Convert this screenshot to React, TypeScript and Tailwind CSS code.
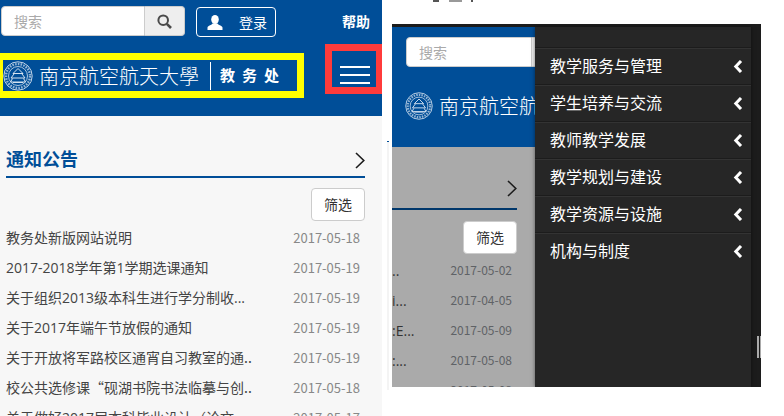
const cjk = "font-['Noto_Sans_CJK_SC','Liberation_Sans',sans-serif]";
const titleFont = "font-['Open_Sans','Noto_Sans_CJK_SC',sans-serif]";

const notices = [
  { title: "教务处新版网站说明", date: "2017-05-18" },
  { title: "2017-2018学年第1学期选课通知", date: "2017-05-19" },
  { title: "关于组织2013级本科生进行学分制收...", date: "2017-05-19" },
  { title: "关于2017年端午节放假的通知", date: "2017-05-19" },
  { title: "关于开放将军路校区通宵自习教室的通..", date: "2017-05-19" },
  { title: "校公共选修课“砚湖书院书法临摹与创..", date: "2017-05-18" },
  { title: "关于做好2017届本科毕业设计（论文..", date: "2017-05-17" },
];

const dimmedRows = [
  { tail: "..", date: "2017-05-02" },
  { tail: "i...", date: "2017-04-05" },
  { tail: ":E...", date: "2017-05-09" },
  { tail: ":...", date: "2017-05-08" },
  { tail: "", date: "2017-05-08" },
];

const menu = [
  "教学服务与管理",
  "学生培养与交流",
  "教师教学发展",
  "教学规划与建设",
  "教学资源与设施",
  "机构与制度",
];

const Emblem = ({ className }: { className: string }) => (
  <svg viewBox="0 0 30 30" className={`shrink-0 ${className}`} fill="none" stroke="#d5e2f0">
    <circle cx="15" cy="15" r="14.2" strokeWidth="0.9" />
    <circle cx="15" cy="15" r="12" strokeWidth="2.4" strokeDasharray="1.6 1.2" opacity="0.7" />
    <circle cx="15" cy="15" r="9.500" strokeWidth="0.8" />
    <path d="M15 7.500 10 12.500h10zM11 13 8 17h14l-3-4M9.500 17.500 7.500 21h15l-2-3.500M10 21.500h10" strokeWidth="1" />
  </svg>
);

const Chevron = () => (
  <svg viewBox="0 0 10 17" className="h-[17px] w-[10px] shrink-0" fill="none" stroke="#1c1c1c" strokeWidth="1.600">
    <path d="M1 1l7.800 7.500L1 16" />
  </svg>
);

const MenuArrow = () => (
  <svg viewBox="0 0 10 13" className="-mt-px h-[13px] w-[10px] shrink-0" fill="none" stroke="#fff" strokeWidth="3">
    <path d="M8 1 2.800 6.500 8 12" />
  </svg>
);

const SearchIcon = () => (
  <svg viewBox="0 0 15 15" className="h-[15px] w-[15px]" fill="none" stroke="#4a4a4a" strokeWidth="2">
    <circle cx="6.200" cy="6.200" r="4.800" />
    <path d="M9.800 9.800 14 14" strokeWidth="2.600" />
  </svg>
);

const UserIcon = () => (
  <svg viewBox="0 0 16 15" className="h-[15px] w-[16px] shrink-0" fill="#fff">
    <ellipse cx="8" cy="4.500" rx="3.800" ry="4.500" />
    <path d="M5.500 8.500C5 10 1 10.500.5 12.500V15h15v-2.500c-.5-2-4.500-2.500-5-4z" />
  </svg>
);

const SearchInput = ({ className }: { className: string }) => (
  <div className={`flex h-[30px] shrink-0 items-center rounded-l-[4px] border border-[#ccc] bg-white pl-[12px] text-[14px] text-[#aaa] ${className}`}>
    搜索
  </div>
);

const FilterButton = () => (
  <div className="flex h-[33px] w-[54px] items-center justify-center rounded-[4px] border border-[#ccc] bg-white text-[14px] text-[#333]">
    筛选
  </div>
);

const App = () => {
  return (
    <div className={`flex h-[416px] w-[784px] overflow-hidden bg-white ${cjk}`}>
      <div className="h-[416px] w-[382px] shrink-0 overflow-hidden bg-[#f7f7f7]">
        <div className="h-[116px] bg-[#004e98]">
          <div className="flex items-start pl-[1px] pt-[6px]">
            <SearchInput className="w-[144px]" />
            <div className="flex h-[30px] w-[40px] items-center justify-center rounded-r-[4px] border border-l-0 border-[#ccc] bg-[#eee]">
              <SearchIcon />
            </div>
            <div className="ml-[11px] mt-[1px] flex h-[30px] w-[80px] items-center rounded-[4px] border border-white pl-[10px] text-[14px] text-white">
              <UserIcon />
              <span className="ml-[16px]">登录</span>
            </div>
            <span className="ml-[66px] mt-[6px] text-[14px] leading-[18px] font-bold text-white">帮助</span>
          </div>
          <div className="mt-[7px] flex items-start">
            <div className="mt-[9px] flex h-[45px] w-[304px] items-center border-[7px] border-l-[3px] border-[#ff0] bg-[#004e98]">
              <Emblem className="h-[30px] w-[30px]" />
              <span className="ml-[6px] text-[20px] leading-none font-light whitespace-nowrap text-white">南京航空航天大學</span>
              <div className="ml-[11px] h-[28px] w-px bg-white" />
              <span className="ml-[9px] text-[15px] font-bold tracking-[7px] whitespace-nowrap text-white">教务处</span>
            </div>
            <div className="ml-[21px] flex h-[50px] w-[57px] flex-col items-center justify-end gap-[6px] border-[7px] border-r-[6px] border-[#ff3b3b] pb-[3px] pl-[2px]">
              <div className="h-[2px] w-[30px] bg-white" />
              <div className="h-[2px] w-[30px] bg-white" />
              <div className="h-[2px] w-[30px] bg-white" />
            </div>
          </div>
        </div>
        <div className="px-[6px] pr-[17px] pt-[28px]">
          <div className="flex h-[34px] items-center justify-between border-b-2 border-[#004e98]">
            <span className="-mt-[3px] text-[18px] font-bold text-[#004e98]">通知公告</span>
            <Chevron />
          </div>
          <div className="mt-[10px] flex justify-end">
            <FilterButton />
          </div>
          <div className="mt-[2px]">
            {notices.map((n) => (
              <div key={n.date + n.title} className="flex h-[30px] items-center justify-between pr-[5px]">
                <span className={`-mt-[1px] text-[14px] whitespace-nowrap text-[#444] ${/\d/.test(n.title) ? titleFont : cjk}`}>{n.title}</span>
                <span className="text-[13px] text-[#888]">{n.date}</span>
              </div>
            ))}
          </div>
        </div>
      </div>

      {/* sliver of the page behind the screenshots */}
      <div className="ml-[5px] mt-[141px] h-[249px] w-[2px] shrink-0 border-t border-[#004e98] bg-[#f4f4f4]" />

      <div className="ml-[3px] flex h-[387px] w-[369px] shrink-0 flex-col">
        <div className="flex h-[24px] shrink-0 items-start pl-[41px]">
          <div className="h-[2px] w-[6px] bg-[#555]" />
          <div className="ml-[10px] h-[2px] w-[13px] bg-[#999]" />
          <div className="ml-[9px] h-[2px] w-[2px] bg-[#555]" />
        </div>
        <div className="flex min-h-0 flex-1 flex-col overflow-hidden bg-[#1c1c1c]">
          <div className="h-[3px] shrink-0" />
          <div className="flex min-h-0 flex-1">
            <div className="flex w-[143px] shrink-0 flex-col overflow-hidden">
              <div className="h-[120px] shrink-0 bg-[#004e98] pl-[14px] pt-[10px]">
                <div className="flex">
                  <SearchInput className="w-[126px]" />
                  <div className="h-[30px] w-[10px] shrink-0 border-y border-[#ccc] bg-[#eee]" />
                </div>
                <div className="-ml-[1px] mt-[25px] flex items-center whitespace-nowrap">
                  <Emblem className="h-[28px] w-[28px]" />
                  <span className="ml-[6px] text-[20px] leading-none font-light text-white">南京航空航天大學</span>
                </div>
              </div>
              <div className="min-h-0 flex-1 overflow-hidden bg-[#aaa] pr-[18px]">
                <div className="mt-[29px] flex h-[34px] items-center justify-end border-b-2 border-[#00376b] pb-[8px]">
                  <Chevron />
                </div>
                <div className="mt-[11px] flex justify-end">
                  <FilterButton />
                </div>
                <div className="mt-[1px]">
                  {dimmedRows.map((r) => (
                    <div key={r.date + r.tail} className="flex h-[30px] items-center justify-between pr-[5px]">
                      <span className={`text-[14px] text-[#333] ${titleFont}`}>{r.tail}</span>
                      <span className="text-[12px] text-[#5f6266]">{r.date}</span>
                    </div>
                  ))}
                </div>
              </div>
            </div>

            <div className="w-[216px] shrink-0 bg-[#262626] shadow-[0_0_4px_rgba(0,0,0,0.5)]">
              <div className="h-[21px] border-b border-[#1c1c1c]" />
              {menu.map((m) => (
                <div key={m} className="flex h-[37px] items-center justify-between border-t border-b border-t-[#333] border-b-[#1c1c1c] pl-[15px] pr-[8px] text-white last:border-b-transparent">
                  <span className="-mt-[3px] text-[16px]">{m}</span>
                  <MenuArrow />
                </div>
              ))}
            </div>

            <div className="flex w-[10px] shrink-0 items-start gap-[1px] pl-[6px] pt-[309px]">
              <div className="h-[22px] w-[2px] bg-[#aaa]" />
              <div className="h-[22px] w-px bg-[#aaa]" />
            </div>
          </div>
        </div>
      </div>
    </div>
  );
};

export default App;
